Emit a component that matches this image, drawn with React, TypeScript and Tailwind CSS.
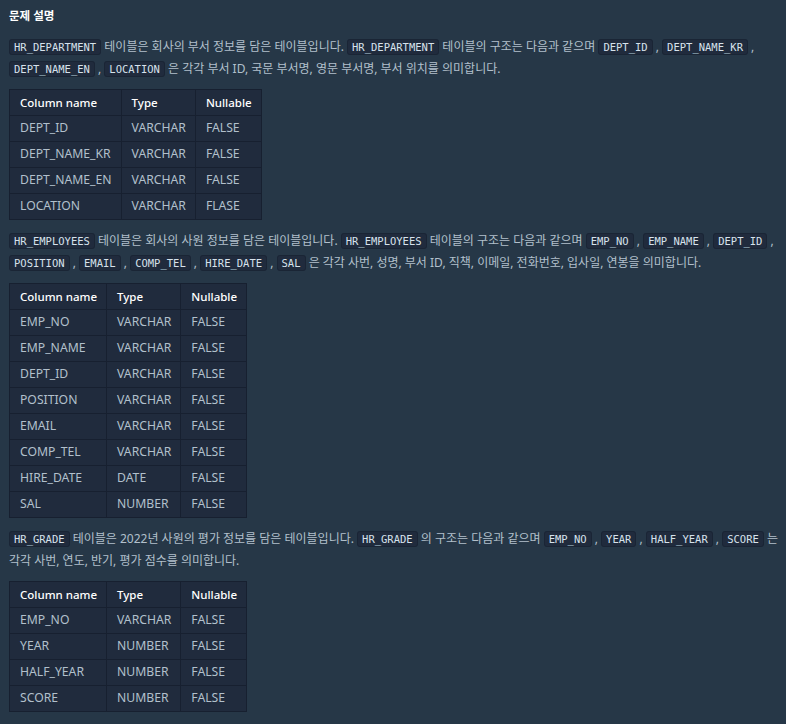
import React from "react";

const C = ({ children }: { children: React.ReactNode }) => (
  <code className="rounded-[3px] border border-[#1a2535] bg-[#202b3d] px-[4px] py-[1px] font-['DejaVu_Sans_Mono',monospace] text-[10.5px] text-[#d7e2ec]">
    {children}
  </code>
);

type Row = [string, string, string];

const Table = ({ rows }: { rows: Row[] }) => (
  <table className="mt-[9px] border-collapse border border-[#172030] bg-[#202b3d]">
    <thead>
      <tr className="h-[26px] text-[11.5px]">
        <th className="border border-[#172030] pl-[10px] pr-[9px] text-left font-medium text-white">Column name</th>
        <th className="border border-[#172030] pl-[10px] pr-[9px] text-left font-medium text-white">Type</th>
        <th className="border border-[#172030] pl-[10px] pr-[9px] text-left font-medium text-white">Nullable</th>
      </tr>
    </thead>
    <tbody>
      {rows.map((r, i) => (
        <tr key={i} className="h-[26px] text-[12.2px]">
          {r.map((c, j) => (
            <td key={j} className="border border-[#172030] pl-[10px] pr-[9px] text-[#b2c0cc]">
              {c}
            </td>
          ))}
        </tr>
      ))}
    </tbody>
  </table>
);

export default function App() {
  return (
    <div className="min-h-[724px] w-[786px] bg-[#263747] pl-[9px] pr-[2px] pt-[8px] font-['Noto_Sans','Noto_Sans_CJK_KR',sans-serif] text-[#b2c0cc]">
      <div className="text-[11.5px] font-bold leading-[16px] text-white">문제 설명</div>
      <p className="mt-[12px] whitespace-nowrap text-[12px] leading-[22px]">
        <C>HR_DEPARTMENT</C> 테이블은 회사의 부서 정보를 담은 테이블입니다. <C>HR_DEPARTMENT</C> 테이블의 구조는 다음과 같으며{" "}
        <C>DEPT_ID</C> , <C>DEPT_NAME_KR</C> ,<br />
        <C>DEPT_NAME_EN</C> , <C>LOCATION</C> 은 각각 부서 ID, 국문 부서명, 영문 부서명, 부서 위치를 의미합니다.
      </p>
      <Table
        rows={[
          ["DEPT_ID", "VARCHAR", "FALSE"],
          ["DEPT_NAME_KR", "VARCHAR", "FALSE"],
          ["DEPT_NAME_EN", "VARCHAR", "FALSE"],
          ["LOCATION", "VARCHAR", "FLASE"],
        ]}
      />
      <p className="mt-[10px] whitespace-nowrap text-[12px] leading-[22px]">
        <C>HR_EMPLOYEES</C> 테이블은 회사의 사원 정보를 담은 테이블입니다. <C>HR_EMPLOYEES</C> 테이블의 구조는 다음과 같으며{" "}
        <C>EMP_NO</C> , <C>EMP_NAME</C> , <C>DEPT_ID</C> ,<br />
        <C>POSITION</C> , <C>EMAIL</C> , <C>COMP_TEL</C> , <C>HIRE_DATE</C> , <C>SAL</C> 은 각각 사번, 성명, 부서 ID, 직책, 이메일, 전화번호, 입사일, 연봉을 의미합니다.
      </p>
      <Table
        rows={[
          ["EMP_NO", "VARCHAR", "FALSE"],
          ["EMP_NAME", "VARCHAR", "FALSE"],
          ["DEPT_ID", "VARCHAR", "FALSE"],
          ["POSITION", "VARCHAR", "FALSE"],
          ["EMAIL", "VARCHAR", "FALSE"],
          ["COMP_TEL", "VARCHAR", "FALSE"],
          ["HIRE_DATE", "DATE", "FALSE"],
          ["SAL", "NUMBER", "FALSE"],
        ]}
      />
      <p className="mt-[10px] whitespace-nowrap text-[12px] leading-[22px]">
        <C>HR_GRADE</C> 테이블은 2022년 사원의 평가 정보를 담은 테이블입니다. <C>HR_GRADE</C> 의 구조는 다음과 같으며 <C>EMP_NO</C> ,{" "}
        <C>YEAR</C> , <C>HALF_YEAR</C> , <C>SCORE</C> 는<br />
        각각 사번, 연도, 반기, 평가 점수를 의미합니다.
      </p>
      <Table
        rows={[
          ["EMP_NO", "VARCHAR", "FALSE"],
          ["YEAR", "NUMBER", "FALSE"],
          ["HALF_YEAR", "NUMBER", "FALSE"],
          ["SCORE", "NUMBER", "FALSE"],
        ]}
      />
    </div>
  );
}
